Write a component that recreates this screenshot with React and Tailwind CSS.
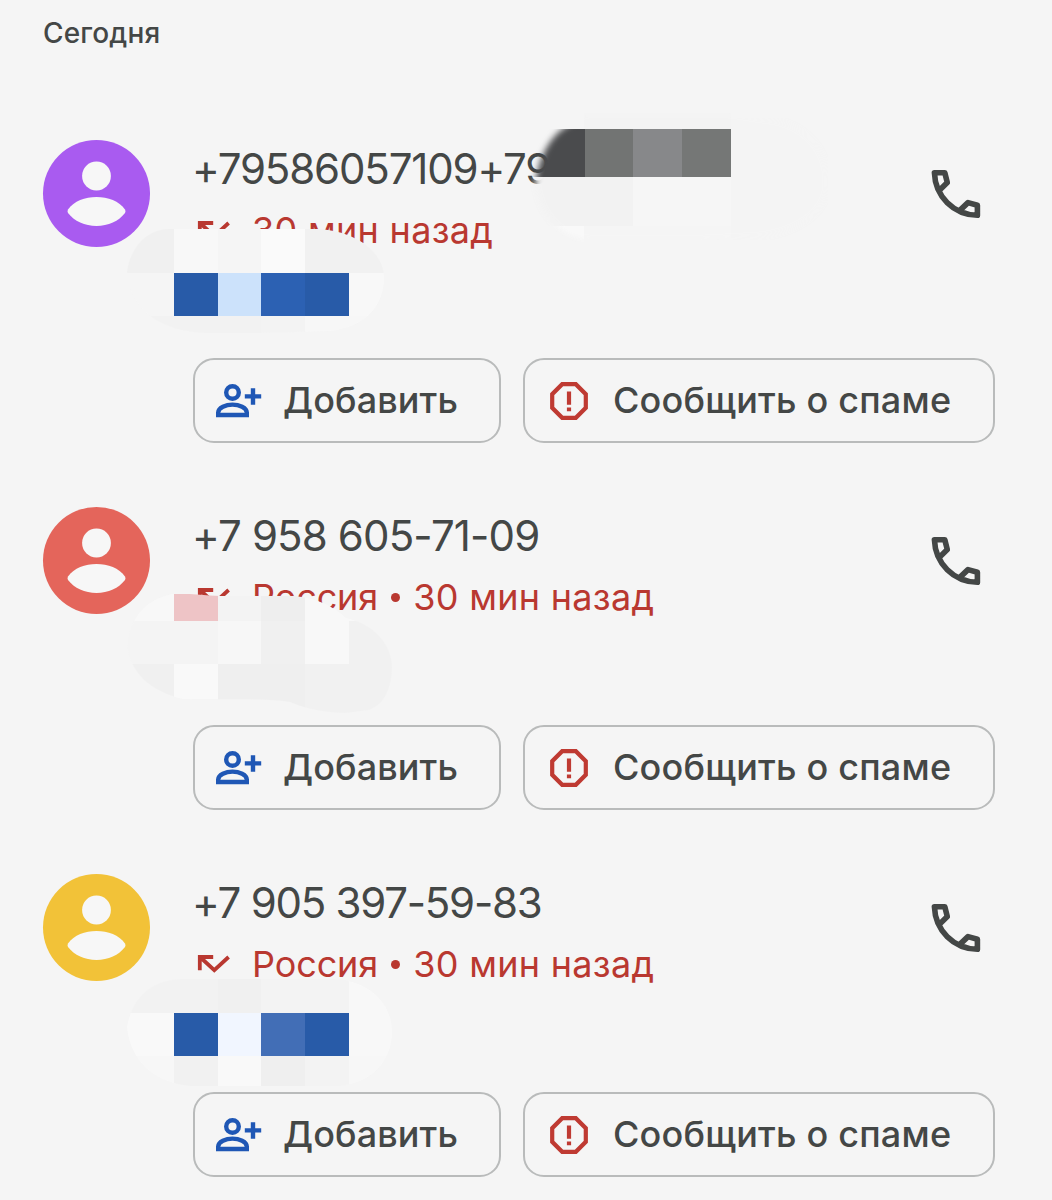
import React from 'react';

const calls = [
  {
    id: 1,
    number: '+79586057109+79',
    place: null,
    time: '30 мин назад',
    avatar: 'bg-[#a95bf0]',
    numberTracking: 'tracking-[-1.15px]',
    masks: ['number', 'first'],
  },
  {
    id: 2,
    number: '+7 958 605-71-09',
    place: 'Россия',
    time: '30 мин назад',
    avatar: 'bg-[#e4655b]',
    numberTracking: 'tracking-[-0.85px]',
    masks: ['second'],
  },
  {
    id: 3,
    number: '+7 905 397-59-83',
    place: 'Россия',
    time: '30 мин назад',
    avatar: 'bg-[#f2c238]',
    numberTracking: 'tracking-[-1.25px]',
    masks: ['third'],
  },
];

// Mosaic patches that hide private details.
// cells: [x, y, width, height, color], relative to the row
const mosaics = {
  number: {
    blur: 3,
    shape: 'M535 46 C539 14 552 -6 569 -15 L584 -27 H731 L760 -22 C800 -20 828 5 828 42 C828 75 795 92 760 97 L700 100 H590 C565 98 541 80 536 46 Z',
    cells: [
      [584, -27, 147, 16, '#f3f3f3'],
      [731, -22, 97, 122, '#f4f4f4'],
      [528, 37, 105, 49, '#f2f2f2'],
      [633, 37, 98, 49, '#f6f6f6'],
      [536, 86, 48, 16, '#f9f9f9'],
      [584, 86, 147, 14, '#f5f5f5'],
      [520, -11.5, 64.5, 48.5, '#4a4b4d'],
      [584.5, -11.5, 48.5, 48.5, '#727473'],
      [633, -11.5, 49, 48.5, '#87888a'],
      [682, -11.5, 48.5, 48.5, '#757776'],
    ],
  },
  first: {
    blur: 0,
    shape: 'M127 132 C130 108 146 90 168 89 H318 C356 91 384 112 384 138 C384 168 362 188 330 191 L260 193 H205 C160 191 130 170 127 132 Z',
    cells: [
      [127, 89, 47, 43.5, '#f0f0f0'],
      [174, 89, 43.5, 43.5, '#f8f8f8'],
      [217.5, 89, 43.5, 43.5, '#f5f5f5'],
      [261, 89, 44, 43.5, '#fafafa'],
      [305, 89, 80, 43.5, '#f1f1f1'],
      [127, 132.5, 47, 43.5, '#f5f5f5'],
      [348, 132.5, 37, 43.5, '#f8f8f8'],
      [127, 176, 134, 18, '#f2f2f2'],
      [261, 176, 44, 18, '#f3f3f3'],
      [305, 176, 80, 18, '#f7f7f7'],
      [174, 132.5, 43.5, 43.5, '#285ba8'],
      [217.5, 132.5, 43.5, 43.5, '#cce2fb'],
      [261, 132.5, 44, 43.5, '#2c61b3'],
      [305, 132.5, 43.5, 43.5, '#285ba8'],
    ],
  },
  second: {
    blur: 0,
    shape: 'M127 137 C132 108 146 93 172 87 C190 86 204 89 220 89 H295 C322 92 336 102 346 111 C374 117 392 138 392 160 C391 186 382 199 368 203 L345 206 C318 205 302 200 290 195 C270 191 220 193 183 192 C150 184 130 166 127 137 Z',
    cells: [
      [127, 87, 47, 26.5, '#f8f8f8'],
      [174, 87, 43.5, 26.5, '#eec4c6'],
      [217.5, 87, 43.5, 26.5, '#f3f3f3'],
      [261, 87, 44, 26.5, '#eeeeee'],
      [305, 87, 90, 26.5, '#f8f8f8'],
      [127, 113.5, 90.5, 43.5, '#f4f4f4'],
      [217.5, 113.5, 43.5, 43.5, '#f7f7f7'],
      [261, 113.5, 44, 43.5, '#f0f0f0'],
      [305, 113.5, 43.5, 43.5, '#f8f8f8'],
      [348.5, 113.5, 44, 43.5, '#f1f1f1'],
      [127, 157, 47, 50, '#f0f0f0'],
      [174, 157, 43.5, 50, '#f9f9f9'],
      [217.5, 157, 87.5, 50, '#efefef'],
      [305, 157, 88, 50, '#f1f1f1'],
    ],
  },
  third: {
    blur: 0,
    shape: 'M127 153 C132 124 150 107 180 105 H335 C370 107 392 130 392 158 C392 188 370 210 338 212 H190 C150 208 130 184 127 153 Z',
    cells: [
      [127, 105, 90.5, 33.5, '#f2f2f2'],
      [217.5, 105, 43.5, 33.5, '#f0f0f0'],
      [261, 105, 87.5, 33.5, '#f3f3f3'],
      [348.5, 105, 44, 33.5, '#f8f8f8'],
      [127, 138.5, 47, 43.5, '#f9f9f9'],
      [348.5, 138.5, 44, 43.5, '#f8f8f8'],
      [127, 182, 47, 30, '#f7f7f7'],
      [174, 182, 43.5, 30, '#f1f1f1'],
      [217.5, 182, 43.5, 30, '#f9f9f9'],
      [261, 182, 44, 30, '#efefef'],
      [305, 182, 43.5, 30, '#f3f3f3'],
      [348.5, 182, 44, 30, '#f7f7f7'],
      [174, 138.5, 43.5, 43.5, '#285ba8'],
      [217.5, 138.5, 43.5, 43.5, '#f1f6ff'],
      [261, 138.5, 44, 43.5, '#426eb6'],
      [305, 138.5, 43.5, 43.5, '#285ba8'],
    ],
  },
};

const Mosaic = ({ name }) => {
  const { shape, cells, blur } = mosaics[name];

  return (
    <svg
      viewBox="0 0 1052 367"
      shapeRendering="crispEdges"
      className="pointer-events-none absolute top-0 left-0 h-[367px] w-[1052px] overflow-visible"
    >
      <defs>
        <filter id={`soft-${name}`}>
          <feGaussianBlur stdDeviation={blur} />
        </filter>
        <mask id={`mask-${name}`} maskUnits="userSpaceOnUse" x="0" y="-60" width="1052" height="430">
          <path
            d={shape}
            fill="#fff"
            shapeRendering="auto"
            filter={blur ? `url(#soft-${name})` : undefined}
          />
        </mask>
      </defs>
      <g mask={`url(#mask-${name})`}>
        {cells.map(([x, y, width, height, color]) => (
          <rect key={`${x}-${y}`} x={x} y={y} width={width} height={height} fill={color} />
        ))}
      </g>
    </svg>
  );
};

const Avatar = ({ color }) => (
  <div className={`h-[107px] w-[107px] shrink-0 rounded-full ${color}`}>
    <svg viewBox="0 0 107 107" className="h-full w-full" fill="#f7f7f7">
      <circle cx="53.5" cy="36" r="14.4" />
      <path d="M25 69.5 C31 61 42 57 53.5 57 S76 61 82 69.5 Q83 71 82 73 C76 81 65 86 53.5 86 S31 81 25 73 Q24 71 25 69.5 Z" />
    </svg>
  </div>
);

const PhoneIcon = () => (
  <svg
    viewBox="0 0 50 50"
    className="h-[50px] w-[50px]"
    fill="none"
    stroke="#444746"
    strokeWidth="5.6"
    strokeLinejoin="round"
  >
    <path d="M8.2 21.5 L16.3 13.6 L13.8 3.7 H3.4 C4.2 27.5 22.5 45.6 46.4 46.3 V36.3 L37 33.6 L28.6 41.6" />
  </svg>
);

const MissedIcon = () => (
  <svg viewBox="0 0 34 20" className="h-5 w-[34px] shrink-0" fill="none" stroke="#b93830" strokeWidth="3.8">
    <path d="M2.8 16.2 V3 H16.2 M3 3 L17.3 16.2 L31.6 3" />
  </svg>
);

const AddPersonIcon = () => (
  <svg viewBox="0 0 46 34" className="h-[34px] w-[46px] shrink-0" fill="none" stroke="#1f57b5" strokeWidth="4.4">
    <circle cx="16.5" cy="8.5" r="6.3" />
    <path d="M2.2 31 V28.5 C2.2 23.5 10 20.6 16.5 20.6 S30.8 23.5 30.8 28.5 V31 Z" />
    <path d="M37 4.3 V20.8 M28.8 12.4 H45.2" />
  </svg>
);

const SpamIcon = () => (
  <svg viewBox="0 0 38 38" className="h-[38px] w-[38px] shrink-0" fill="none" stroke="#bf3a32" strokeWidth="4.2">
    <path d="M12.2 2.2 H25.8 L35.8 12.2 V25.8 L25.8 35.8 H12.2 L2.2 25.8 V12.2 Z" />
    <path d="M19 9.5 V22.8 M19 25.4 V29.2" />
  </svg>
);

const CallRow = ({ call }) => (
  <div className="relative h-[367px] w-[1052px] shrink-0">
    <div className="flex h-[218px] items-start pl-[43px]">
      <Avatar color={call.avatar} />
      <div className="ml-[42px] w-[703px] whitespace-nowrap">
        <div className={`h-14 pt-px text-[42px] leading-14 font-normal text-[#444746] ${call.numberTracking}`}>
          {call.number}
        </div>
        <div className="mt-[9px] flex h-[50px] items-center pl-[5px] text-[36px] text-[#b93830]">
          <MissedIcon />
          <div className="ml-[21px] flex">
            {call.place && (
              <>
                <span className="tracking-[-0.1px]">{call.place}</span>
                <span className="ml-[13px] flex w-[22px] items-center">
                  <i className="h-[9px] w-[9px] rounded-full bg-[#b93830]" />
                </span>
              </>
            )}
            <span className="tracking-[0.3px]">{call.time}</span>
          </div>
        </div>
      </div>
      <div className="mt-[29px] ml-[36px]">
        <PhoneIcon />
      </div>
    </div>

    <div className="flex gap-[22px] pl-[193px] text-[36px] font-medium whitespace-nowrap text-[#444746]">
      <button className="flex h-[85px] w-[308px] items-center rounded-[21px] border-2 border-[#b9bbbb] pl-[21px]">
        <AddPersonIcon />
        <span className="ml-[21px] pb-[2px] tracking-[0.1px]">Добавить</span>
      </button>
      <button className="flex h-[85px] w-[472px] items-center rounded-[21px] border-2 border-[#b9bbbb] pl-[25px]">
        <SpamIcon />
        <span className="ml-[25px] pb-[2px] tracking-[0.2px]">Сообщить о спаме</span>
      </button>
    </div>

    {call.masks.map((name) => (
      <Mosaic key={name} name={name} />
    ))}
  </div>
);

const App = () => {
  return (
    <div className="flex h-[1200px] w-[1052px] flex-col overflow-hidden bg-[#f5f5f5] font-['Inter','Noto_Sans',sans-serif]">
      <div className="h-[140px] shrink-0 pt-[13px] pl-[43px] text-[28px] leading-10 font-medium tracking-[0.15px] text-[#444746]">
        Сегодня
      </div>
      {calls.map((call) => (
        <CallRow key={call.id} call={call} />
      ))}
    </div>
  );
};

export default App;
